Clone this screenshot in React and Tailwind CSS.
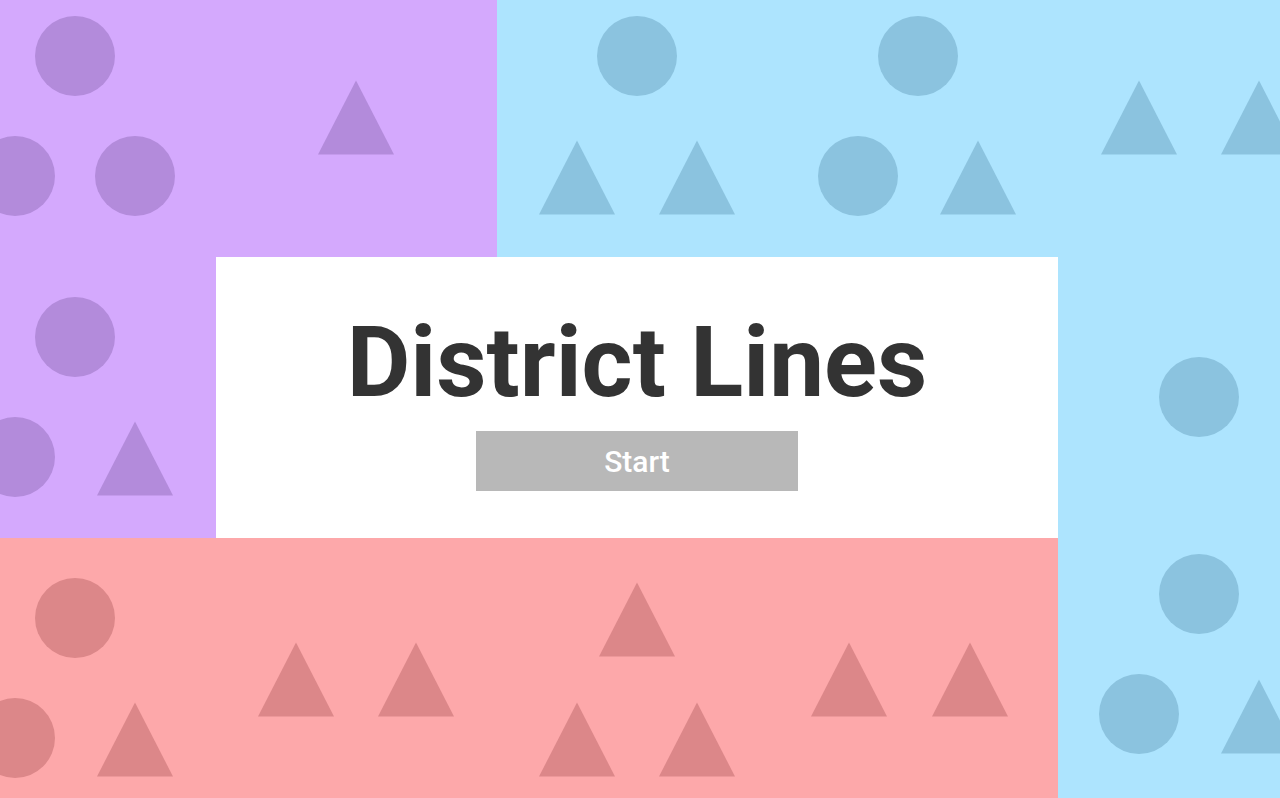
import React from 'react';

// shape centres, page coordinates
const PURPLE_LEFT = [
  ['c', 75, 56], ['c', 15, 176], ['c', 135, 176],
  ['c', 75, 337], ['c', 15, 457], ['t', 135, 457],
];
const PURPLE_TOP = [['t', 356, 116]];
const BLUE_TOP = [
  ['c', 637, 56], ['t', 577, 176], ['t', 697, 176],
  ['c', 918, 56], ['c', 858, 176], ['t', 978, 176],
];
const BLUE_RIGHT = [
  ['t', 1139, 116], ['t', 1259, 116], ['c', 1199, 397],
  ['c', 1199, 594], ['c', 1139, 714], ['t', 1259, 715],
];
const RED_BOTTOM = [
  ['c', 75, 618], ['c', 15, 738], ['t', 135, 738],
  ['t', 296, 678], ['t', 416, 678],
  ['t', 637, 618], ['t', 577, 738], ['t', 697, 738],
  ['t', 849, 678], ['t', 970, 678],
];

const Shape = ({ kind, x, y, color }) => (
  <svg
    className="absolute"
    width="80"
    height="80"
    viewBox="0 0 80 80"
    style={{ left: x - 40, top: y - 40 }}
  >
    {kind === 'c' ? (
      <circle cx="40" cy="40" r="40" fill={color} />
    ) : (
      <polygon points="40,4.5 78,78.5 2,78.5" fill={color} />
    )}
  </svg>
);

const Field = ({ className, shapes, ox, oy, color }) => (
  <div className={`relative overflow-hidden ${className}`}>
    {shapes.map(([kind, x, y], i) => (
      <Shape key={i} kind={kind} x={x - ox} y={y - oy} color={color} />
    ))}
  </div>
);

const App = () => {
  return (
    <div
      className="grid h-[798px] w-full grid-cols-[216px_281px_281px_280px_1fr] grid-rows-[257px_281px_1fr] overflow-hidden"
      style={{ fontFamily: 'Roboto, "Liberation Sans", Arial, sans-serif' }}
    >
      <Field className="col-start-1 row-start-1 row-span-2 bg-[#d4a9fd]" shapes={PURPLE_LEFT} ox={0} oy={0} color="#b38bdb" />
      <Field className="col-start-2 row-start-1 bg-[#d4a9fd]" shapes={PURPLE_TOP} ox={216} oy={0} color="#b38bdb" />
      <Field className="col-start-3 col-span-2 row-start-1 bg-[#ade4fe]" shapes={BLUE_TOP} ox={497} oy={0} color="#8bc3df" />
      <Field className="col-start-5 row-start-1 row-span-3 bg-[#ade4fe]" shapes={BLUE_RIGHT} ox={1058} oy={0} color="#8bc3df" />

      <div className="col-start-2 col-span-3 row-start-2 flex flex-col items-center bg-white pt-[57px]">
        <h1 className="h-[98px] text-[98px] font-bold leading-none text-[#333333]">
          District Lines
        </h1>
        <button className="mt-[19px] flex h-[60px] w-[322px] items-center justify-center bg-[#b8b8b8] text-[30px] font-medium text-white">
          Start
        </button>
      </div>

      <Field className="col-start-1 col-span-4 row-start-3 bg-[#fda8aa]" shapes={RED_BOTTOM} ox={0} oy={538} color="#dc8789" />
    </div>
  );
};

export default App;
